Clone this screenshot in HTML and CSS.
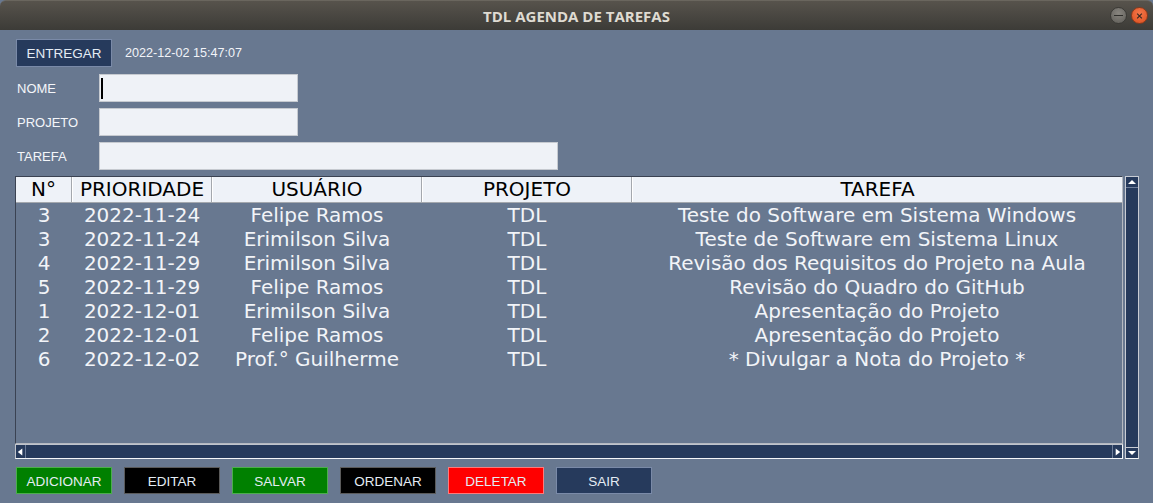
FILE: index.html
```html
<!DOCTYPE html>
<html lang="pt">
<head>
<meta charset="utf-8">
<title>TDL AGENDA DE TAREFAS</title>
<link rel="stylesheet" href="styles.css">
</head>
<body>
<div class="window">
  <header class="titlebar">
    <span class="title">TDL AGENDA DE TAREFAS</span>
    <div class="controls">
      <span class="ctl ctl-min"><span class="dash"></span></span>
      <span class="ctl ctl-close">
        <svg width="16" height="16" viewBox="0 0 16 16"><path d="M5.5 5.5 L10.5 10.5 M10.5 5.5 L5.5 10.5" stroke="#3b2a22" stroke-width="1.3" fill="none"/></svg>
      </span>
    </div>
  </header>
  <main class="content">
    <div class="toprow">
      <button class="btn btn-navy">ENTREGAR</button>
      <span class="date">2022-12-02 15:47:07</span>
    </div>
    <div class="field">
      <span class="label">NOME</span>
      <div class="input short"><span class="caret"></span></div>
    </div>
    <div class="field">
      <span class="label">PROJETO</span>
      <div class="input short"></div>
    </div>
    <div class="field">
      <span class="label">TAREFA</span>
      <div class="input long"></div>
    </div>

    <div class="tablebox">
      <div class="tablepane">
        <div class="viewport">
          <div class="thead">
            <div class="th">N°</div>
            <div class="th">PRIORIDADE</div>
            <div class="th">USUÁRIO</div>
            <div class="th">PROJETO</div>
            <div class="th">TAREFA</div>
          </div>
          <div class="tbody">
            <div class="tr"><span>3</span><span>2022-11-24</span><span>Felipe Ramos</span><span>TDL</span><span>Teste do Software em Sistema Windows</span></div>
            <div class="tr"><span>3</span><span>2022-11-24</span><span>Erimilson Silva</span><span>TDL</span><span>Teste de Software em Sistema Linux</span></div>
            <div class="tr"><span>4</span><span>2022-11-29</span><span>Erimilson Silva</span><span>TDL</span><span>Revisão dos Requisitos do Projeto na Aula</span></div>
            <div class="tr"><span>5</span><span>2022-11-29</span><span>Felipe Ramos</span><span>TDL</span><span>Revisão do Quadro do GitHub</span></div>
            <div class="tr"><span>1</span><span>2022-12-01</span><span>Erimilson Silva</span><span>TDL</span><span>Apresentação do Projeto</span></div>
            <div class="tr"><span>2</span><span>2022-12-01</span><span>Felipe Ramos</span><span>TDL</span><span>Apresentação do Projeto</span></div>
            <div class="tr"><span>6</span><span>2022-12-02</span><span>Prof.° Guilherme</span><span>TDL</span><span>* Divulgar a Nota do Projeto *</span></div>
          </div>
        </div>
        <div class="hscroll">
          <span class="arrow-btn"><svg width="10" height="12" viewBox="0 0 10 12"><path d="M7 2 L2 6 L7 10 Z" fill="#ffffff"/></svg></span>
          <span class="track"></span>
          <span class="arrow-btn right"><svg width="10" height="12" viewBox="0 0 10 12"><path d="M3 2 L8 6 L3 10 Z" fill="#ffffff"/></svg></span>
        </div>
      </div>
      <div class="vscroll">
        <span class="varrow"><svg width="12" height="10" viewBox="0 0 12 10"><path d="M2 7 L6 3 L10 7 Z" fill="#ffffff"/></svg></span>
        <span class="vtrack"></span>
        <span class="varrow bottom"><svg width="12" height="10" viewBox="0 0 12 10"><path d="M2 3 L10 3 L6 7 Z" fill="#ffffff"/></svg></span>
      </div>
    </div>

    <div class="actions">
      <button class="btn btn-green">ADICIONAR</button>
      <button class="btn btn-black">EDITAR</button>
      <button class="btn btn-green">SALVAR</button>
      <button class="btn btn-black">ORDENAR</button>
      <button class="btn btn-red">DELETAR</button>
      <button class="btn btn-navy">SAIR</button>
    </div>
  </main>
</div>
</body>
</html>
```

FILE: styles.css
```css
* { box-sizing: border-box; }

html, body {
  margin: 0;
  padding: 0;
  background: #687890;
  width: 1153px;
  height: 503px;
  overflow: hidden;
}

.window {
  width: 1153px;
  height: 503px;
  display: flex;
  flex-direction: column;
  background: #687890;
  font-family: "Liberation Sans", Arial, sans-serif;
}

.titlebar {
  position: relative;
  height: 30px;
  flex: 0 0 30px;
  background: linear-gradient(#57534c, #3c3b37);
  border-top: 1px solid #6a665e;
  border-radius: 6px 6px 0 0;
  display: flex;
  align-items: center;
  justify-content: center;
}

.title {
  font-family: "Open Sans", "DejaVu Sans", sans-serif;
  font-weight: 700;
  font-size: 15px;
  color: #dfdbd2;
}

.controls {
  position: absolute;
  right: 5px;
  top: 6px;
  display: flex;
  gap: 4px;
}

.ctl {
  width: 17px;
  height: 17px;
  border-radius: 50%;
  display: flex;
  align-items: center;
  justify-content: center;
}

.ctl-min {
  background: radial-gradient(circle at 50% 35%, #88857f, #5e5c57);
  border: 1px solid #3a3935;
}

.ctl-min .dash {
  width: 9px;
  height: 1.5px;
  background: #2f2e2b;
}

.ctl-close {
  background: radial-gradient(circle at 50% 35%, #f4774a, #dc4f1f);
  border: 1px solid #8a3a1c;
}

.content {
  flex: 1;
  display: flex;
  flex-direction: column;
  padding: 9px 0 0 15px;
}

.toprow {
  display: flex;
  align-items: center;
  height: 28px;
  padding-left: 1px;
}

.btn {
  width: 96px;
  height: 28px;
  font-family: "Liberation Sans", Arial, sans-serif;
  font-size: 13.5px;
  color: #e4ecf4;
  border: 1px solid;
  padding: 1px 0 0 0;
  margin: 0;
  display: flex;
  align-items: center;
  justify-content: center;
}

.btn-navy { background: #263a5c; border-color: #7a8aa8; }
.btn-green { background: #008000; border-color: #4cae4c; }
.btn-black { background: #000000; border-color: #5a5a5a; }
.btn-red { background: #ff0000; border-color: #ff7a7a; }

.date {
  margin-left: 13px;
  font-size: 12.6px;
  color: #f2f4f8;
}

.field {
  display: flex;
  align-items: center;
  height: 28px;
  margin-top: 6px;
}

.toprow + .field { margin-top: 7px; }

.label {
  width: 84px;
  padding-left: 2px;
  font-size: 13px;
  color: #f4f6fa;
}

.input {
  height: 28px;
  background: #eff2f7;
  border: 1px solid #c6cad0;
  position: relative;
}

.input.short { width: 199px; }
.input.long { width: 459px; }

.caret {
  position: absolute;
  left: 1px;
  top: 3px;
  width: 2px;
  height: 21px;
  background: #000;
}

.tablebox {
  margin-top: 6px;
  display: flex;
  gap: 2px;
  height: 283px;
}

.tablepane {
  width: 1108px;
  display: flex;
  flex-direction: column;
}

.viewport {
  flex: 1;
  border-top: 1px solid #3a4252;
  border-left: 1px solid #3a4252;
  border-right: 1px solid #b4b8c0;
  border-bottom: 1px solid #b4b8c0;
  font-family: "DejaVu Sans", sans-serif;
  font-size: 20px;
  overflow: hidden;
}

.thead {
  display: grid;
  grid-template-columns: 56px 140px 210px 210px 490px;
  height: 26px;
  background: #eef2f8;
  border-bottom: 1px solid #a4a8ae;
}

.th {
  color: #000;
  text-align: center;
  line-height: 25px;
  border-right: 1px solid #a4a8ae;
  border-left: 1px solid #ffffff;
}

.th:first-child { border-left: none; }
.th:last-child { border-right: none; }

.tr {
  display: grid;
  grid-template-columns: 56px 140px 210px 210px 490px;
  height: 24px;
  line-height: 24px;
  color: #f2f4f8;
  text-align: center;
  white-space: nowrap;
}

.hscroll {
  height: 15px;
  display: flex;
  background: #263a5c;
  border-top: 1px solid #c0c4cc;
  border-bottom: 1px solid #f4f6f8;
  border-left: 1px solid #c0c4cc;
  border-right: 1px solid #f4f6f8;
}

.arrow-btn {
  width: 10px;
  display: flex;
  align-items: center;
  justify-content: center;
  border-right: 1px solid #6c7c98;
}

.arrow-btn.right {
  border-right: none;
  border-left: 1px solid #6c7c98;
}

.track { flex: 1; }

.vscroll {
  width: 14px;
  display: flex;
  flex-direction: column;
  background: #263a5c;
  border: 1px solid #c8ccd4;
  border-bottom-color: #f4f6f8;
}

.varrow {
  height: 11px;
  display: flex;
  align-items: center;
  justify-content: center;
  border-bottom: 1px solid #6c7c98;
}

.varrow.bottom {
  border-bottom: none;
  border-top: 1px solid #c8ccd4;
}

.vtrack { flex: 1; }

.actions {
  margin-top: 8px;
  padding-left: 1px;
  display: flex;
  gap: 12px;
}

.actions .btn { height: 27px; }
```
